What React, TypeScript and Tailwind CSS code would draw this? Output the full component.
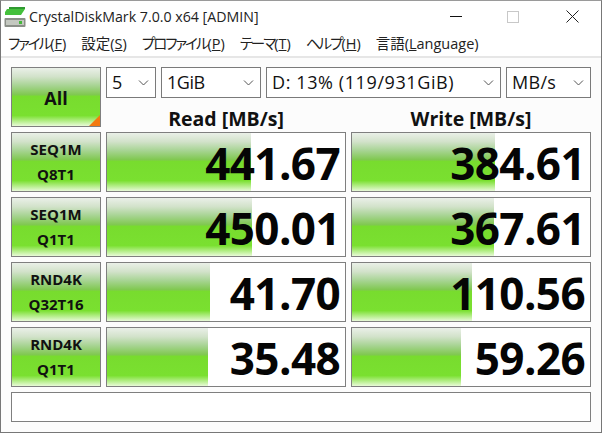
const font = { fontFamily: '"Open Sans", "Noto Sans CJK JP", sans-serif' }

interface Row {
  top: string
  bottom: string
  read: string
  write: string
  readBar: number
  writeBar: number
}

const rows: Row[] = [
  { top: 'SEQ1M', bottom: 'Q8T1', read: '441.67', write: '384.61', readBar: 144, writeBar: 143 },
  { top: 'SEQ1M', bottom: 'Q1T1', read: '450.01', write: '367.61', readBar: 145, writeBar: 142 },
  { top: 'RND4K', bottom: 'Q32T16', read: '41.70', write: '110.56', readBar: 103, writeBar: 120 },
  { top: 'RND4K', bottom: 'Q1T1', read: '35.48', write: '59.26', readBar: 101, writeBar: 109 },
]

const greenBg =
  'bg-[linear-gradient(to_bottom,#eaf0e8_0%,#d2e2ca_15%,#a8d494_30%,#80c850_46%,#78dc2e_49%,#7ae030_82%,#e8fad8_100%)]'

function MenuItem({ label, hotkey, wide, kana }: { label: string; hotkey: string; wide?: boolean; kana?: boolean }) {
  const rest = wide ? 'anguage)' : ')'
  return (
    <span className="whitespace-nowrap">
      <span className={kana ? 'tracking-[-2px]' : ''}>{label}</span>(<span className="underline">{hotkey}</span>{rest}
    </span>
  )
}

function Combo({ value, className }: { value: string; className: string }) {
  return (
    <div className={`h-[31px] border border-[#7a7a7a] bg-white flex items-center justify-between pl-[5px] pr-[6px] text-[18px] text-[#111] ${className}`}>
      <span>{value}</span>
      <svg width="11" height="6" viewBox="0 0 11 6" fill="none" stroke="#555" strokeWidth="1">
        <path d="M1 0.5 L5.5 5 L10 0.5" />
      </svg>
    </div>
  )
}

function Score({ value, bar }: { value: string; bar: number }) {
  return (
    <div className="relative w-[240px] h-[60px] border border-[#7f7f7f] bg-white overflow-hidden">
      <div className={`absolute left-0 top-0 bottom-0 ${greenBg}`} style={{ width: bar }} />
      <div className="relative h-full flex items-center justify-end pr-[5px] pt-[2px] text-[44px] font-bold text-[#050505] leading-none tracking-[-0.6px]">
        {value}
      </div>
    </div>
  )
}

export default function App() {
  return (
    <div className="w-[602px] h-[433px] border border-[#777] border-t-[#9a9a9a] bg-white flex flex-col overflow-hidden" style={font}>
      <div className="h-[31px] flex items-center shrink-0">
        <svg className="ml-[3px]" width="22" height="22" viewBox="0 0 22 22">
          <path d="M5 1 H21 V3 H5 Z" fill="#2f9a30" />
          <path d="M3 3 H21 L17 9 H1 V6 Z" fill="#45c03c" />
          <rect x="0.5" y="12" width="21" height="9" rx="1" fill="#8b8f88" />
          <rect x="2" y="14" width="18" height="5" fill="#c4c8c0" />
          <rect x="15" y="15" width="3" height="3" fill="#46b83c" />
        </svg>
        <span className="ml-[3px] text-[14.2px] text-[#222]">CrystalDiskMark 7.0.0 x64 [ADMIN]</span>
        <div className="ml-auto flex items-center pr-[6px] text-[#222]">
          <div className="w-[46px] flex justify-center">
            <div className="w-[12px] h-px bg-[#111]" />
          </div>
          <div className="w-[46px] ml-[11px] flex justify-center">
            <div className="w-[12px] h-[12px] border border-[#c8c8c8]" />
          </div>
          <div className="w-[46px] ml-[13px] flex justify-center">
            <svg width="13" height="13" viewBox="0 0 13 13" stroke="#222" strokeWidth="1">
              <path d="M0.5 0.5 L12.5 12.5 M12.5 0.5 L0.5 12.5" />
            </svg>
          </div>
        </div>
      </div>
      <div className="h-[24px] flex items-center gap-[15px] pl-[7px] text-[14.5px] text-[#222] shrink-0 [font-feature-settings:'palt']">
        <MenuItem label="ファイル" hotkey="F" kana />
        <MenuItem label="設定" hotkey="S" />
        <MenuItem label="プロファイル" hotkey="P" kana />
        <MenuItem label="テーマ" hotkey="T" kana />
        <MenuItem label="ヘルプ" hotkey="H" kana />
        <MenuItem label="言語" hotkey="L" wide />
      </div>
      <div className="flex-1 bg-[#fcfcfc] border-t-2 border-[#e6e6e6] pl-[10px] pt-[9px] flex flex-col">
        <div className="flex gap-[5px] h-[60px]">
          <div className={`relative w-[90px] h-[60px] border border-[#7f7f7f] flex items-center justify-center pt-[2px] text-[18px] font-bold text-[#111] overflow-hidden ${greenBg}`}>
            All
            <div className="absolute right-0 bottom-0 w-0 h-0 border-l-[11px] border-t-[11px] border-l-transparent border-t-transparent border-b-0 border-r-[11px] border-r-[#f47a10]" />
          </div>
          <div className="flex flex-col w-[485px]">
            <div className="flex gap-[5px]">
              <Combo value="5" className="w-[50px]" />
              <Combo value="1GiB" className="w-[100px] tracking-[-0.5px]" />
              <Combo value="D: 13% (119/931GiB)" className="w-[235px] tracking-[0.6px]" />
              <Combo value="MB/s" className="w-[85px] tracking-[0.3px]" />
            </div>
            <div className="flex gap-[5px] text-[19.5px] font-bold text-[#111] h-[29px] items-end leading-[16px]">
              <div className="w-[240px] text-center">Read [MB/s]</div>
              <div className="w-[240px] text-center">Write [MB/s]</div>
            </div>
          </div>
        </div>
        <div className="flex flex-col gap-[5px] mt-[5px]">
          {rows.map((row) => (
            <div key={row.top + row.bottom} className="flex gap-[5px]">
              <div className={`w-[90px] h-[60px] border border-[#7f7f7f] flex flex-col items-center justify-center text-[15px] font-bold leading-[25px] text-[#111] ${greenBg}`}>
                <span>{row.top}</span>
                <span>{row.bottom}</span>
              </div>
              <Score value={row.read} bar={row.readBar} />
              <Score value={row.write} bar={row.writeBar} />
            </div>
          ))}
        </div>
        <div className="w-[580px] h-[30px] mt-[5px] border border-[#7f7f7f] bg-white" />
      </div>
    </div>
  )
}
